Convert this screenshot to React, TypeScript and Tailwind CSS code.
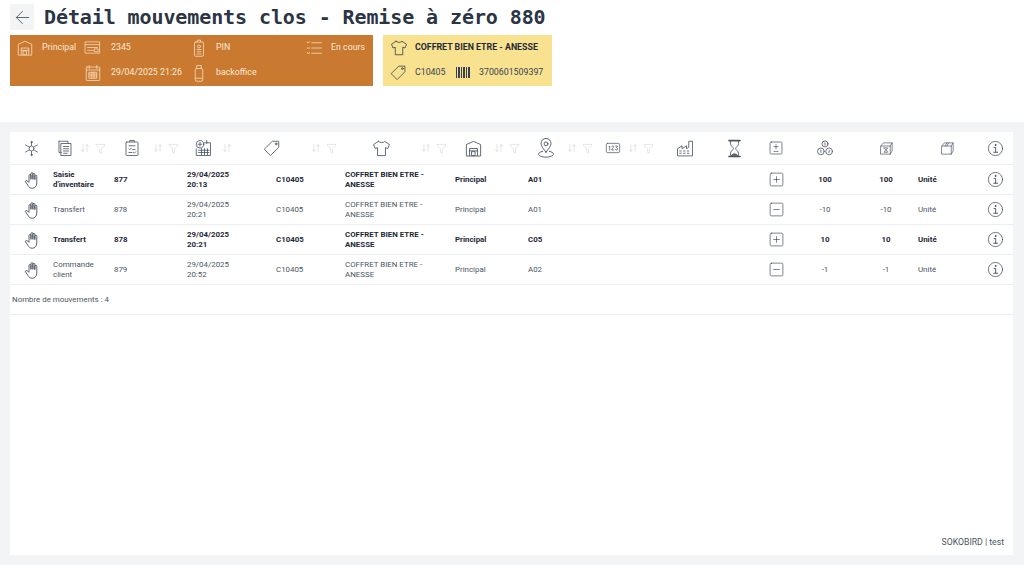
import type { ReactNode } from 'react';
import { ArrowLeft, SquarePlus, SquareMinus, ArrowDownUp, Funnel } from 'lucide-react';

function Ico({ size = 18, color = '#4b5563', children }: { size?: number; color?: string; children: ReactNode }) {
  return (
    <svg width={size} height={size} viewBox="0 0 24 24" fill="none" stroke={color} strokeWidth={1.1} strokeLinecap="round" strokeLinejoin="round">
      {children}
    </svg>
  );
}

type IconProps = { size?: number; color?: string };

const HandIcon = (p: IconProps) => (
  <Ico {...p}>
    <path d="M8 14V6a1.300 1.300 0 0 1 2.600 0v5M10.600 10V3.500a1.300 1.300 0 0 1 2.600 0V11M13.200 10V4.500a1.300 1.300 0 0 1 2.600 0V11M15.800 11V7a1.300 1.300 0 0 1 2.600 0v9c0 4-2.500 7-6 7-3 0-4.500-1.500-6-4l-3-4.500c-.8-1.300 1-2.500 2-1.500L8 15" />
  </Ico>
);
const HubIcon = (p: IconProps) => (
  <Ico {...p}>
    <circle cx="12" cy="12" r="3.500" />
    <path d="M12 3v5M12 16v5M3.500 7l5.500 3M15 14l5.500 3M3.500 17l5.500-3M15 10l5.500-3" />
    <circle cx="12" cy="3" r="1" />
    <circle cx="12" cy="21" r="1" />
  </Ico>
);
const DocsIcon = (p: IconProps) => (
  <Ico {...p}>
    <path d="M4 3h12v3M4 3v15h3" />
    <rect x="7" y="6" width="13" height="16" />
    <path d="M10 10h7M10 13h7M10 16h7M10 19h5" />
  </Ico>
);
const ClipboardIcon = (p: IconProps) => (
  <Ico {...p}>
    <rect x="4" y="4" width="16" height="18" rx="1" />
    <path d="M9 4V2h6v2M8 9h8M8 13l1 1 2-2M13 14h3M8 18h4M14 18l1 1 2-2" />
  </Ico>
);
const CalcCalendarIcon = (p: IconProps) => (
  <Ico {...p}>
    <circle cx="8" cy="7" r="5" />
    <path d="M8 4.500v5M5.500 7h5" />
    <path d="M14 5h8v17H3v-9" />
    <path d="M17 2v4M6 15h14M6 18h14M10 13v8M14 13v8M18 13v8" />
  </Ico>
);
const TagIcon = (p: IconProps) => (
  <Ico {...p}>
    <path d="M13 3h8v8L10 22l-8-8z" />
    <circle cx="17.500" cy="6.500" r="1.300" />
  </Ico>
);
const ShirtIcon = (p: IconProps) => (
  <Ico {...p}>
    <path d="M8 3 2 7l2 5 3-1v10h10V11l3 1 2-5-6-4c-1 2-7 2-8 0z" />
  </Ico>
);
const WarehouseIcon = (p: IconProps) => (
  <Ico {...p}>
    <path d="M3 21V7l9-4 9 4v14z" />
    <path d="M7 21v-9h10v9M7 15h10" />
    <rect x="10" y="16" width="4" height="5" />
  </Ico>
);
const PinIcon = (p: IconProps) => (
  <Ico {...p}>
    <path d="M12 17c-3-4-6-7-6-10.500a6 6 0 0 1 12 0C18 10 15 13 12 17z" />
    <circle cx="12" cy="7" r="2.300" />
    <path d="M8 16c-3 .5-5 2-5 3.500S7 23 12 23s9-2 9-3.500-2-3-5-3.500" />
  </Ico>
);
const LotIcon = (p: IconProps) => (
  <Ico {...p}>
    <rect x="2" y="5" width="20" height="14" rx="2" />
    <path d="M6 10l1-1v6M10 10c0-1.500 3-1.500 3 0s-3 3-3 5h3M16 9h3l-2 2.500c2 0 2.500 3.500 0 3.500-1 0-1.500-.5-1.500-1" />
  </Ico>
);
const FactoryIcon = (p: IconProps) => (
  <Ico {...p}>
    <path d="M2 22V13l6-4v4l6-4v4l3-2V3h5v19z" />
    <path d="M5 16h2M5 19h2M10 16h2M10 19h2M15 16h2M15 19h2" />
  </Ico>
);
const HourglassIcon = (p: IconProps) => (
  <Ico {...p}>
    <path d="M5 2h14M5 22h14" strokeWidth={2} />
    <path d="M7 3v3c0 3 3.500 4 3.500 6S7 15 7 18v3h10v-3c0-3-3.500-4-3.500-6S17 9 17 6V3" />
    <path d="M8 21c1-3 7-3 8 0z" fill="#6b7280" />
  </Ico>
);
const PlusMinusIcon = (p: IconProps) => (
  <Ico {...p}>
    <rect x="3" y="3" width="18" height="18" rx="2" />
    <path d="M12 7v6M9 10h6M9 17h6" />
  </Ico>
);
const CoinsIcon = (p: IconProps) => (
  <Ico {...p}>
    <circle cx="12" cy="6.500" r="4" />
    <circle cx="6.500" cy="16.500" r="4.500" />
    <circle cx="17.500" cy="16.500" r="4.500" />
    <path d="M12 5v3M6.500 15v3M17.500 15v3" />
  </Ico>
);
const BoxHourglassIcon = (p: IconProps) => (
  <Ico {...p}>
    <path d="M3 8l4-5h14v13l-3 5H3zM3 8h15v13M18 8l3-5" />
    <path d="M8 11h6l-2.500 3.500L14 18H8l2.500-3.500z" />
  </Ico>
);
const BoxIcon = (p: IconProps) => (
  <Ico {...p}>
    <path d="M3 8l4-5h14v13l-3 5H3zM3 8h15v13M18 8l3-5" />
    <path d="M11 3l-3 5M14 3l-3 5" />
  </Ico>
);
const InfoIcon = ({ size = 17, color = '#374151' }: IconProps) => (
  <Ico size={size} color={color}>
    <circle cx="12" cy="12" r="10" strokeWidth={1} />
    <circle cx="12" cy="7" r=".7" fill={color} />
    <path d="M10 10.500h2.200V17M9.500 17.300h5.500" strokeWidth={1.2} />
  </Ico>
);
const CardIcon = (p: IconProps) => (
  <Ico {...p}>
    <rect x="2" y="4" width="20" height="16" />
    <path d="M2 8h20M5 12h14M5 16h8M15 14h5v4h-5z" />
  </Ico>
);
const PhoneTagIcon = (p: IconProps) => (
  <Ico {...p}>
    <rect x="6" y="4" width="12" height="19" rx="1.500" />
    <path d="M10 4V1.500h4V4" />
    <circle cx="12" cy="10" r="2" />
    <path d="M9.500 14h5M9.500 17h5M9.500 20h5" />
  </Ico>
);
const CalendarIcon = (p: IconProps) => (
  <Ico {...p}>
    <rect x="3" y="4" width="18" height="18" rx="1" />
    <path d="M7 2v4M17 2v4M3 8h18M7 11h10v8H7zM7 13.500h10M7 16h10M10.500 11v8M13.500 11v8" />
  </Ico>
);
const MobileIcon = (p: IconProps) => (
  <Ico {...p}>
    <rect x="7" y="6" width="10" height="17" rx="2" />
    <path d="M9 6V2h6v4M7 19h10" />
  </Ico>
);
const ListIcon = (p: IconProps) => (
  <Ico {...p}>
    <path d="M9 5h13M9 12h13M9 19h13M3 4l1 1.500L6 3.500M3 12h3M3 18l1.500 2L6 18" />
  </Ico>
);
const BarcodeIcon = () => (
  <svg width="14" height="11" viewBox="0 0 14 11" fill="#374151">
    <path d="M0 0h1v11H0zM2 0h2v11H2zM5 0h1v11H5zM7 0h2v11H7zM10 0h1v11h-1zM12 0h2v11h-2z" />
  </svg>
);

const SortFilter = ({ sortClass, filter = true }: { sortClass: string; filter?: boolean }) => (
  <>
    <span className={`flex w-[14px] justify-center text-[#c3c8cf] ${sortClass}`}>
      <ArrowDownUp size={10} strokeWidth={1.2} />
    </span>
    {filter && (
      <span className="flex w-[16px] justify-center text-[#c3c8cf]">
        <Funnel size={11} strokeWidth={1} />
      </span>
    )}
  </>
);

const HeadIcon = ({ children }: { children: ReactNode }) => (
  <span className="flex w-[24px] shrink-0 justify-center">{children}</span>
);

const rows = [
  { type: ['Saisie', "d'inventaire"], ref: '877', time: '20:13', loc: 'A01', sign: '+', qty: '100', bold: true },
  { type: ['Transfert'], ref: '878', time: '20:21', loc: 'A01', sign: '-', qty: '-10', bold: false },
  { type: ['Transfert'], ref: '878', time: '20:21', loc: 'C05', sign: '+', qty: '10', bold: true },
  { type: ['Commande', 'client'], ref: '879', time: '20:52', loc: 'A02', sign: '-', qty: '-1', bold: false },
];

export default function App() {
  return (
    <div className="flex h-[565px] w-[1024px] flex-col overflow-hidden bg-[#f3f4f6] text-[8.8px] font-['Roboto',sans-serif]">
      <header className="h-[122px] shrink-0 bg-white px-[10px] pt-[4px]">
        <div className="flex items-center gap-[10px]">
          <button className="flex h-[26px] w-[24px] items-center justify-center bg-[#f3f4f6] text-[#4b5563]">
            <ArrowLeft size={21} strokeWidth={1} />
          </button>
          <h1 className="font-['DejaVu_Sans_Mono',monospace] text-[20px] leading-[26px] font-bold tracking-[-0.1px] text-[#2b3544]">
            Détail mouvements clos - Remise à zéro 880
          </h1>
        </div>
        <div className="mt-[5px] flex gap-[10px]">
          <div className="grid h-[51px] w-[363px] grid-cols-[26px_42px_27px_79px_26px_89px_26px_1fr] grid-rows-[25px_25px] items-center bg-[#c97a30] pl-[6px] text-[#fbe9d6]">
            <WarehouseIcon size={18} color="#f5d9bc" />
            <span>Principal</span>
            <CardIcon size={17} color="#f5d9bc" />
            <span>2345</span>
            <PhoneTagIcon size={18} color="#f5d9bc" />
            <span>PIN</span>
            <ListIcon size={18} color="#f5d9bc" />
            <span>En cours</span>
            <span />
            <span />
            <CalendarIcon size={18} color="#f5d9bc" />
            <span>29/04/2025 21:26</span>
            <MobileIcon size={18} color="#f5d9bc" />
            <span>backoffice</span>
            <span />
            <span />
          </div>
          <div className="grid h-[51px] w-[169px] grid-cols-[25px_41px_23px_1fr] grid-rows-[25px_25px] items-center bg-[#f9e28f] pl-[7px] text-[#374151]">
            <ShirtIcon size={18} color="#374151" />
            <span className="col-span-3 font-bold whitespace-nowrap text-[#1f2937]">COFFRET BIEN ETRE - ANESSE</span>
            <TagIcon size={17} color="#374151" />
            <span>C10405</span>
            <BarcodeIcon />
            <span>3700601509397</span>
          </div>
        </div>
      </header>

      <main className="mt-[10px] mr-[11px] ml-[10px] flex h-[423px] flex-col bg-white text-[7.9px] text-[#4b5563]">
        <div className="grid h-[33px] shrink-0 grid-cols-[34px_67px_71px_69px_109px_92px_73px_67px_72px_49px_42px_49px_61px_61px_48px_24px] items-center border-b border-[#eceef1] pl-[9px]">
          <HeadIcon><HubIcon size={17} /></HeadIcon>
          <div className="flex items-center"><HeadIcon><DocsIcon size={18} /></HeadIcon><SortFilter sortClass="ml-px" /></div>
          <div className="flex items-center"><HeadIcon><ClipboardIcon size={18} /></HeadIcon><SortFilter sortClass="ml-[7px]" /></div>
          <div className="flex items-center"><HeadIcon><CalcCalendarIcon size={18} /></HeadIcon><SortFilter sortClass="ml-[5px]" filter={false} /></div>
          <div className="flex items-center"><HeadIcon><TagIcon size={18} /></HeadIcon><SortFilter sortClass="ml-[25px]" /></div>
          <div className="flex items-center"><HeadIcon><ShirtIcon size={19} /></HeadIcon><SortFilter sortClass="ml-[26px]" /></div>
          <div className="flex items-center"><HeadIcon><WarehouseIcon size={19} /></HeadIcon><SortFilter sortClass="ml-[7px]" /></div>
          <div className="flex items-center"><HeadIcon><PinIcon size={20} /></HeadIcon><SortFilter sortClass="ml-[7px]" /></div>
          <div className="flex items-center"><HeadIcon><LotIcon size={16} /></HeadIcon><SortFilter sortClass="ml-px" /></div>
          <HeadIcon><FactoryIcon size={18} /></HeadIcon>
          <HeadIcon><HourglassIcon size={19} /></HeadIcon>
          <HeadIcon><PlusMinusIcon size={16} /></HeadIcon>
          <HeadIcon><CoinsIcon size={18} /></HeadIcon>
          <HeadIcon><BoxHourglassIcon size={15} /></HeadIcon>
          <HeadIcon><BoxIcon size={15} /></HeadIcon>
          <HeadIcon><InfoIcon /></HeadIcon>
        </div>

        {rows.map((row, i) => (
          <div
            key={i}
            className={`grid h-[30px] shrink-0 grid-cols-[43px_61px_73px_89px_69px_110px_73px_72px_73px_91px_24px_74px_48px_73px_24px] items-center border-b border-[#eceef1] leading-[10px] ${row.bold ? 'font-bold text-[#1f2937]' : ''}`}
          >
            <span className="flex justify-center"><HandIcon size={18} color="#374151" /></span>
            <span>{row.type.map((t) => <span key={t} className="block">{t}</span>)}</span>
            <span>{row.ref}</span>
            <span>29/04/2025<br />{row.time}</span>
            <span>C10405</span>
            <span>COFFRET BIEN ETRE -<br />ANESSE</span>
            <span>Principal</span>
            <span>{row.loc}</span>
            <span />
            <span />
            <span className="flex justify-center text-[#374151]">
              {row.sign === '+' ? <SquarePlus size={17} strokeWidth={0.9} /> : <SquareMinus size={17} strokeWidth={0.9} />}
            </span>
            <span className="text-center">{row.qty}</span>
            <span className="text-center">{row.qty}</span>
            <span className="pl-2">Unité</span>
            <span className="flex justify-center"><InfoIcon /></span>
          </div>
        ))}

        <div className="flex h-[30px] shrink-0 items-center border-b border-[#eceef1] pl-[2px]">Nombre de mouvements : 4</div>

        <div className="flex flex-1 items-end justify-end pr-[9px] pb-[6px] text-[8.7px] text-[#4b5563]">SOKOBIRD | test</div>
      </main>
    </div>
  );
}
